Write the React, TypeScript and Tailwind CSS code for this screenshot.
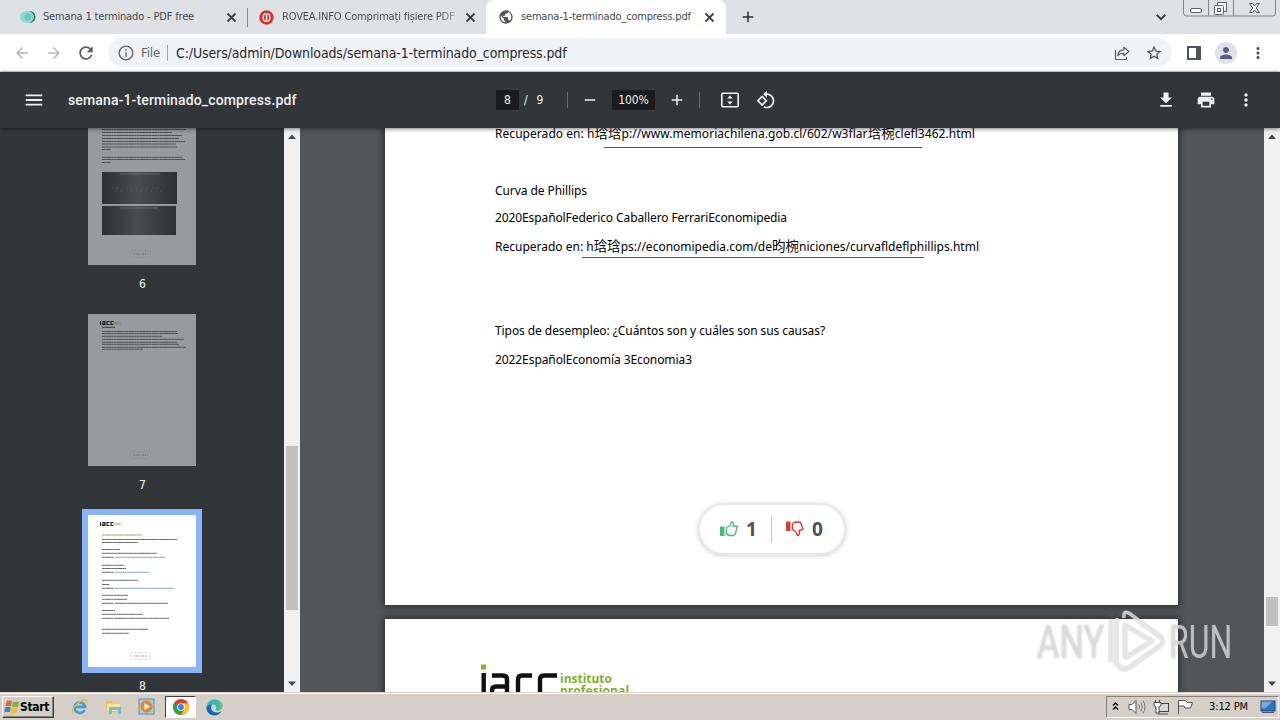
import type { ReactNode } from "react";
import {
  MdAdd, MdArrowBack, MdArrowForward, MdFileDownload, MdInfoOutline,
  MdMenu, MdMoreVert, MdPerson, MdPrint, MdPublic, MdRefresh, MdRemove, MdRotate90DegreesCcw, MdStarBorder,
} from "react-icons/md";

const UI = "font-['DejaVu_Sans_Condensed','DejaVu_Sans',sans-serif]";

function Close({ className }: { className: string }) {
  return (
    <svg className={`h-[15px] w-[15px] shrink-0 ${className}`} viewBox="0 0 15 15" fill="none">
      <path d="m3.500 3.500 8 8M11.500 3.500l-8 8" stroke="#3c4043" strokeWidth="1.800" />
    </svg>
  );
}

function TabStrip() {
  return (
    <div className={`relative flex h-[34px] shrink-0 items-start bg-[#dee1e6] text-[11px] text-[#45494d] ${UI}`}>
      <div className="flex h-[34px] w-[247px] items-center pl-[20px]">
        <svg className="h-4 w-4 shrink-0" viewBox="0 0 16 16">
          <ellipse cx="10.5" cy="8" rx="5" ry="5.8" fill="#1d776f" />
          <ellipse cx="7" cy="8" rx="7" ry="6" fill="#8edbd0" />
          <circle cx="8" cy="8" r="3.500" fill="#6cc8bc" />
        </svg>
        <span className="ml-[7px] w-[176px] overflow-hidden pt-px whitespace-pre tracking-[-0.16px]">Semana 1 terminado - PDF free</span>
        <Close className="ml-[5px]" />
      </div>
      <div className="mt-[8px] h-[19px] w-px bg-[#858a92]" />
      <div className="flex h-[34px] w-[238px] items-center pl-[11px]">
        <svg className="h-[15px] w-[15px] shrink-0" viewBox="0 0 15 15">
          <circle cx="7.5" cy="7.5" r="7.2" fill="#d5312f" />
          <rect x="4.3" y="3.8" width="6.4" height="7.4" rx="2.4" fill="none" stroke="#fff" strokeWidth="1.3" />
          <path d="M7.5 5v5.2" stroke="#fff" strokeWidth="1.5" />
        </svg>
        <span className="ml-[8px] w-[174px] overflow-hidden bg-linear-to-r from-[#45494d] from-90% to-[#a9adb3] bg-clip-text pt-px whitespace-pre tracking-[-0.16px] text-transparent">ROVEA.INFO Comprimați fișiere PDF</span>
        <Close className="ml-[7px]" />
      </div>
      <div className="flex h-[34px] w-[240px] items-center rounded-t-[8px] bg-white pl-[12px]">
        <MdPublic className="h-4 w-4 shrink-0 text-[#54585c]" />
        <span className="ml-[7px] w-[171px] pt-px whitespace-pre tracking-[-0.18px]">semana-1-terminado_compress.pdf</span>
        <Close className="ml-[10px]" />
      </div>
      <MdAdd className="mt-[8px] ml-[13px] h-[18px] w-[18px] text-[#2b2e31]" />
      <svg className="mt-[8px] ml-[395px] h-[18px] w-[18px]" viewBox="0 0 18 18" fill="none">
        <path d="m4.700 6.800 4.300 4.300 4.300-4.300" stroke="#3c4043" strokeWidth="2" />
      </svg>
      <svg className="ml-[13px] h-[18px] w-[94px]" viewBox="0 0 94 18" fill="none">
        <path d="M.5 0v13a3 3 0 0 0 3 3h86a3 3 0 0 0 3-3V0M25.500 0v16M50.500 0v16" stroke="#80858d" />
        <rect x="7.500" y="8.500" width="11" height="4" rx="1.500" fill="#fff" stroke="#5a5f66" />
        <path d="M34.500 5.500v-3h9v9h-3" fill="#fff" stroke="#5a5f66" />
        <rect x="31.500" y="5.500" width="9" height="9" rx="1" fill="#fff" stroke="#5a5f66" />
        <rect x="34.500" y="8.500" width="3" height="3" stroke="#5a5f66" />
        <path d="M66.500 3.500h3l2 2.500 2-2.500h3l-3.300 4.500 3.300 4.500h-3l-2-2.500-2 2.500h-3l3.300-4.500z" fill="#fff" stroke="#5a5f66" />
      </svg>
    </div>
  );
}

function AddressBar() {
  return (
    <div className={`flex h-[38px] shrink-0 items-center border-b border-[#d5d7da] bg-white ${UI}`}>
      <MdArrowBack className="ml-[13px] h-[18px] w-[18px] text-[#b4b7ba]" />
      <MdArrowForward className="ml-[14px] h-[18px] w-[18px] text-[#b4b7ba]" />
      <MdRefresh className="ml-[13px] h-[20px] w-[20px] text-[#55595d]" />
      <div className="ml-[12px] flex h-[29px] w-[1064px] items-center rounded-full bg-[#f0f3f6]">
        <MdInfoOutline className="ml-[9px] h-[18px] w-[18px] text-[#6a6e72]" />
        <span className="ml-[6px] w-[26px] text-[13px] tracking-[-0.1px] text-[#5f6368]">File</span>
        <span className="h-4 w-px bg-[#a4a8ac]" />
        <span className="ml-[8px] grow pt-px text-[14px] whitespace-pre tracking-[-0.12px] text-[#26292c]">C:/Users/admin/Downloads/semana-1-terminado_compress.pdf</span>
        <svg className="mr-[15px] h-4 w-4" viewBox="0 0 16 16" fill="none" stroke="#5b5f63" strokeWidth="1.200">
          <path d="M1.500 5v9.500h11V12" />
          <path d="M3.800 10.500c.3-3.800 2.300-5.500 6-5.700V2.300L15 6.500l-5.200 4.200V8.200c-2.800 0-4.600.6-6 2.300z" strokeLinejoin="round" />
        </svg>
        <MdStarBorder className="mr-[9px] h-[18px] w-[18px] text-[#4c5054]" />
      </div>
      <svg className="ml-[15px] h-[14px] w-[14px]" viewBox="0 0 14 14">
        <path d="M0 0h14v14H0zM2 2v10h7V2z" fill="#505458" fillRule="evenodd" />
      </svg>
      <div className="ml-[14px] flex h-[22px] w-[22px] items-center justify-center rounded-full bg-[#dfe2e8]">
        <MdPerson className="h-[18px] w-[18px] text-[#505e80]" />
      </div>
      <MdMoreVert className="ml-[12px] h-[18px] w-[18px] text-[#4c5054]" />
    </div>
  );
}

function PdfToolbar() {
  return (
    <div className="relative z-10 flex h-[56px] shrink-0 items-center bg-[#323639] font-['Roboto',sans-serif] text-[#f1f1f1] shadow-[0_1px_4px_rgba(0,0,0,0.5)]">
      <MdMenu className="ml-[23px] h-[22px] w-[22px]" />
      <span className="ml-[23px] w-[428px] text-[14px] font-medium whitespace-pre tracking-[0.14px]">semana-1-terminado_compress.pdf</span>
      <span className={`flex h-5 w-[23px] items-center justify-center bg-[#191b1c] text-[12px] ${UI}`}>8</span>
      <span className={`w-[48px] pl-[5px] text-[12px] whitespace-pre [word-spacing:1px] ${UI}`}>{"/  9"}</span>
      <span className="h-4 w-px bg-[#65686b]" />
      <MdRemove className="ml-[13px] h-[18px] w-[18px]" />
      <span className={`ml-[13px] flex h-5 w-[43px] items-center justify-center bg-[#191b1c] text-[12px] tracking-[-0.1px] ${UI}`}>100%</span>
      <MdAdd className="ml-[13px] h-[18px] w-[18px]" />
      <span className="ml-[13px] h-4 w-px bg-[#65686b]" />
      <svg className="ml-[21px] h-4 w-[18px]" viewBox="0 0 18 16" fill="none" stroke="#f1f1f1">
        <rect x="0.800" y="1.200" width="16.400" height="13.600" rx="1" strokeWidth="1.600" />
        <path d="M6.300 6.500 9 3.500 11.700 6.500zM6.300 9.500 9 12.500 11.700 9.500z" fill="#f1f1f1" stroke="none" />
      </svg>
      <MdRotate90DegreesCcw className="ml-[17px] h-[20px] w-[20px]" />
      <span className="grow" />
      <MdFileDownload className="mr-[20px] h-[20px] w-[20px]" />
      <MdPrint className="mr-[20px] h-[20px] w-[20px]" />
      <MdMoreVert className="mr-[24px] h-[20px] w-[20px]" />
    </div>
  );
}

type Line = [x: number, y: number, w: number, color?: string];

function TextLines({ lines }: { lines: Line[] }) {
  return (
    <g strokeOpacity=".75">
      {lines.map(([x, y, w, color], i) => (
        <path key={i} d={`M${x} ${y}h${w}`} stroke={color ?? "#35383a"} strokeWidth="1" strokeDasharray="3 .2 6 .15 2 .2" />
      ))}
    </g>
  );
}

function ThumbLogo({ muted }: { muted?: boolean }) {
  return (
    <g fill="none">
      <path d="M12.500 7v4M14.500 7.500h2.500v3h-2.500v-1.500h2.500M21.500 7.500h-2.500v3h2.500M25.500 7.500h-2.500v3h2.500" stroke="#1b1d1e" strokeWidth="1.100" />
      <path d="M25.500 8.200h7M25.500 9.800h8" stroke={muted ? "#7c8855" : "#a5c55a"} strokeWidth=".9" />
    </g>
  );
}

function ThumbFooter({ y }: { y: number }) {
  return (
    <g fill="none">
      <rect x="42" y={y - 3.500} width="21" height="7" rx="3.500" stroke="#777" strokeOpacity=".28" strokeWidth=".7" />
      <path d={`M46 ${y}h14`} stroke="#555" strokeOpacity=".7" strokeDasharray="1 1.500 2 1" />
    </g>
  );
}

const page6: Line[] = [
  [14, 1.5, 84], [14, 4.500, 70], [14, 7.500, 80], [14, 10.500, 77], [14, 13.500, 83], [14, 16, 74], [14, 19, 75], [14, 21.500, 9],
  [14, 29.300, 81], [14, 31.500, 83], [14, 34.500, 9],
];
const page7: Line[] = [
  [14, 13.300, 13, "#17191a"], [14, 17.500, 75], [14, 19.500, 76], [14, 22.300, 60], [14, 25.300, 82], [14, 28.300, 75], [14, 30.300, 77],
  [14, 33.300, 84], [14, 35.300, 41],
];
const page8: Line[] = [
  [14, 20, 40, "#7c7b4f"], [14, 24.500, 75], [14, 27.500, 36], [14, 34.500, 18], [14, 38.300, 55], [14, 42.300, 12], [27, 42.300, 50, "#5285a8"],
  [14, 50.300, 22], [14, 53.500, 24], [14, 57.300, 12], [27, 57.300, 34, "#5285a8"], [14, 65.300, 36], [14, 69.500, 7], [14, 73.300, 12],
  [27, 73.300, 59, "#5285a8"], [14, 80.300, 26], [14, 84.300, 25], [14, 88.300, 12], [27, 88.300, 53], [14, 95.500, 13], [14, 99.300, 41],
  [14, 103.300, 12], [27, 103.300, 54], [14, 114.300, 46], [14, 118.300, 27],
];

function ThumbLabel({ children }: { children: ReactNode }) {
  return <div className={`pl-px text-center text-[12px] leading-[16px] text-[#f5f5f5] ${UI}`}>{children}</div>;
}

function Thumbnails() {
  return (
    <div className="flex w-[284px] shrink-0 flex-col items-center overflow-hidden bg-[#323639]">
      <svg className="h-[137px] w-[108px] shrink-0 bg-[#979b9e]" viewBox="0 0 108 137">
        <defs>
          <linearGradient id="chart">
            <stop offset="0" stopColor="#2d3134" />
            <stop offset=".48" stopColor="#4a4c4d" />
            <stop offset="1" stopColor="#2d3134" />
          </linearGradient>
        </defs>
        <TextLines lines={page6} />
        <rect x="14" y="44" width="75" height="32" fill="url(#chart)" />
        <rect x="14" y="78" width="74" height="29" fill="url(#chart)" />
        <path d="M32 46h40M32 80h38" stroke="#777b7e" strokeOpacity=".7" />
        <path d="M24 60h50M28 63h46" stroke="#7a6253" strokeOpacity=".5" strokeDasharray="1 3 2 4" />
        <ThumbFooter y={126} />
      </svg>
      <div className="h-[11px] shrink-0" />
      <ThumbLabel>6</ThumbLabel>
      <div className="h-[22px] shrink-0" />
      <svg className="h-[152px] w-[108px] shrink-0 bg-[#979b9e]" viewBox="0 0 108 152">
        <ThumbLogo muted />
        <TextLines lines={page7} />
        <ThumbFooter y={141} />
      </svg>
      <div className="h-[11px] shrink-0" />
      <ThumbLabel>7</ThumbLabel>
      <div className="h-[16px] shrink-0" />
      <div className="shrink-0 border-[6px] border-[#8ab4f8]">
        <svg className="h-[152px] w-[108px] bg-white" viewBox="0 0 108 152">
          <ThumbLogo />
          <TextLines lines={page8} />
          <ThumbFooter y={141} />
        </svg>
      </div>
      <div className="h-[5px] shrink-0" />
      <ThumbLabel>8</ThumbLabel>
    </div>
  );
}

function Arrow({ up }: { up?: boolean }) {
  return (
    <svg className="mx-auto h-[17px] w-[16px] shrink-0" viewBox="0 0 16 17">
      <path d={up ? "M4 11h8L8 6.500z" : "M4 6.500h8L8 11z"} fill="#45494c" />
    </svg>
  );
}

function Cjk({ children }: { children: ReactNode }) {
  return <span className="font-['Noto_Sans_CJK_SC',sans-serif] text-[13.5px] leading-[1px]">{children}</span>;
}

function Rating() {
  return (
    <div className="mt-[133px] ml-[203px] flex h-[52px] w-[148px] items-center rounded-full border-2 border-[#e8e8e8] bg-white font-['Open_Sans',sans-serif] text-[19px] font-bold text-[#46535e] shadow-[0_1px_5px_rgba(0,0,0,0.18)]">
      <svg className="ml-[20px] h-[18px] w-[19px]" viewBox="0 0 19 18">
        <path d="M0 6.500h4.500V16H0z" fill="#4dbb7b" />
        <path d="M6.500 7.500 10 5.500l1.500-3.800c2.300.3 2.400 2 1.400 4.500h4.400l-1.800 7.500-1.800 1.800H9.500L6.500 14z" fill="none" stroke="#4dbb7b" strokeWidth="1.400" strokeLinejoin="round" />
      </svg>
      <span className="ml-[7px] w-[25px]">1</span>
      <span className="h-[26px] w-px bg-[#c3c7ca]" />
      <svg className="ml-[14px] h-[18px] w-[19px]" viewBox="0 0 19 18">
        <path d="M0 1.500h4.500V11H0z" fill="#cf4034" />
        <path d="M6.500 4 9 2l5.500.3 2.500 7-4 1.200c.9 2.500.6 4.500-1.600 5.200L10 12l-3.500-2.500z" fill="none" stroke="#cf4034" strokeWidth="1.400" strokeLinejoin="round" />
      </svg>
      <span className="ml-[7px]">0</span>
    </div>
  );
}

function Viewer() {
  return (
    <div className="flex min-w-0 grow flex-col overflow-hidden bg-[#525659] pl-[85px]">
      <div className="flex h-[477px] w-[793px] shrink-0 flex-col items-start bg-white pl-[110px] font-['Noto_Sans','Noto_Sans_CJK_SC',sans-serif] text-[12px] leading-[20px] whitespace-pre text-black shadow-[0_0_6px_2px_rgba(0,0,0,0.45)]">
        <div className="mt-[-4px] h-5 shrink-0 tracking-[0.048px]">Recuperado en: h<Cjk>琀琀</Cjk>p://www.memoriachilena.gob.cl/602/w3flar<Cjk>琀椀</Cjk>clefl3462.html</div>
        <div className="mt-[3px] ml-[109px] h-px w-[318px] bg-[#555]" />
        <div className="mt-[33px] h-5 tracking-[-0.08px]">Curva de Phillips</div>
        <div className="mt-[7px] h-5 tracking-[-0.104px]">2020EspañolFederico Caballero FerrariEconomipedia</div>
        <div className="mt-[9px] h-5 tracking-[-0.005px]">Recuperado en: h<Cjk>琀琀</Cjk>ps://economipedia.com/de<Cjk>昀椀</Cjk>niciones/curvafldeflphillips.html</div>
        <div className="ml-[87px] h-px w-[342px] bg-[#555]" />
        <div className="mt-[63px] h-5 tracking-[-0.077px]">Tipos de desempleo: ¿Cuántos son y cuáles son sus causas?</div>
        <div className="mt-[9px] h-5 tracking-[-0.083px]">2022EspañolEconomía 3Economia3</div>
        <Rating />
      </div>
      <div className="mt-[14px] h-[200px] w-[793px] shrink-0 bg-white pt-[44px] pl-[95px] shadow-[0_0_6px_2px_rgba(0,0,0,0.45)]">
        <div className="flex">
          <svg className="h-[40px] w-[78px]" viewBox="0 0 78 40" fill="none">
            <rect x="1" y="1.500" width="5" height="5" fill="#82b536" />
            <path d="M3.700 10v30M12 12.500h11q4 0 4 4V40M28 23.500H16q-4 0-4 4V36M52 12.500H42q-4 0-4 4V40M77 12.500H64q-4 0-4 4V40" stroke="#111" strokeWidth="4.400" />
          </svg>
          <div className="ml-[2px] pt-[10px] font-['Open_Sans',sans-serif] text-[12px] leading-[12px] font-bold text-[#80b02b]">
            <div className="tracking-[-0.02px]">instituto</div>
            <div className="tracking-[0.1px]">profesional</div>
          </div>
        </div>
      </div>
    </div>
  );
}

function Watermark() {
  return (
    <div className="absolute top-[608px] left-[1037px] flex h-[66px] items-center font-['Roboto',sans-serif] text-[47px] leading-none text-[#e0e0e0]/75 [text-shadow:0_0_3px_rgba(110,110,110,0.4)]">
      <span className="w-[71px] origin-left scale-x-[0.73]">ANY</span>
      <svg className="h-[66px] w-[60px]" viewBox="0 0 60 66" fill="none" strokeLinejoin="round">
        <path d="M2 54V12q0-3 4-3M8 58V10M17 50V17l27 16-27 17M14 9q0-7 6-4l34 25M9 56q6 8 13 3l30-21q5-4 1-8" stroke="#707070" strokeOpacity=".14" strokeWidth="6" />
        <path d="M3 54V12M9 56V10M17 50V17l27 16zM16 10q-1-8 5-5l32 24M9 56q6 8 13 3l30-22q4-4 1-8" stroke="#e4e4e4" strokeOpacity=".8" strokeWidth="3.500" />
      </svg>
      <span className="ml-[1px] w-[66px] origin-left scale-x-[0.68]">RUN</span>
    </div>
  );
}

function Taskbar() {
  return (
    <div className={`flex h-[28px] shrink-0 items-center border-t border-[#d4d0c8] bg-[#d5cfc7] pt-[1px] shadow-[inset_0_1px_0_#fff] ${UI}`}>
      <div className="ml-[2px] flex h-[22px] w-[52px] items-center border border-t-white border-r-[#404040] border-b-[#404040] border-l-white bg-[#d5cfc7] shadow-[inset_-1px_-1px_0_#858078]">
        <svg className="ml-px h-4 w-4 shrink-0" viewBox="0 0 16 16">
          <path d="M2.500 2.500Q5 .800 8 2.200L7 7.200Q4 6 1.300 7.500z" fill="#e5652e" />
          <path d="M9 2.500q3 1.200 6-.2L14 7.500Q11 9 8 7.500z" fill="#78b540" />
          <path d="M1.200 8.500Q4 7 6.800 8.300l-1 5Q3 12 .3 13.500z" fill="#3e80cb" />
          <path d="M7.800 8.600q3 1.300 6-.1l-1 5q-3 1.500-6 .2z" fill="#f4bd2e" />
        </svg>
        <span className="text-[12px] font-bold tracking-[-0.3px] text-black">Start</span>
      </div>
      <svg className="ml-[17px] h-[18px] w-[18px]" viewBox="0 0 18 18" fill="none">
        <path d="M13.500 12A5.300 5.300 0 1 1 14 8.800H5" stroke="#3d9fd8" strokeWidth="2.700" />
        <path d="M2 15.500C-1 12 9 1 15 1.800c1.700.4 1.400 2.200.8 3.200" stroke="#e1bd4b" strokeWidth="1.300" />
      </svg>
      <svg className="ml-[16px] h-[18px] w-[18px]" viewBox="0 0 18 18">
        <path d="M1 3h6l1 1.500h7V14H1z" fill="#e5c35d" />
        <path d="M2 5.500h13V13H2z" fill="#f5e39a" />
        <path d="M4 9h12v7h-3v-4H7v4H4z" fill="#79b9dc" />
      </svg>
      <svg className="ml-[15px] h-[18px] w-[18px]" viewBox="0 0 18 18">
        <rect x="1" y="1" width="15" height="15" fill="#a9cbe2" stroke="#5a8fb8" />
        <circle cx="8.500" cy="8.500" r="6" fill="#ee8420" />
        <path d="M6.500 5v7l5.500-3.500z" fill="#fff" />
      </svg>
      <div className="ml-[9px] flex h-[22px] w-[31px] items-center justify-center border border-t-[#404040] border-r-white border-b-white border-l-[#404040] bg-white">
        <svg className="h-4 w-4" viewBox="0 0 16 16">
          <circle cx="8" cy="8" r="8" fill="#e23b2e" />
          <path d="M8 8 1.070 4A8 8 0 0 0 8 16l3.500-6z" fill="#2e9e4c" />
          <path d="M8 4.300h7.100A8 8 0 0 1 8 16l3.500-6z" fill="#fbc520" />
          <circle cx="8" cy="8" r="3.800" fill="#fff" />
          <circle cx="8" cy="8" r="2.900" fill="#3f7de8" />
        </svg>
      </div>
      <svg className="ml-[10px] h-[17px] w-[17px]" viewBox="0 0 17 17">
        <path d="M.500 8C1.200 3 4.500.500 8.500.500c5 0 8 3.300 8 6.800 0 3-2.500 4.200-5 4.200-2 0-2.500-.8-1.500-2 1-2.500-1-4-3.200-4C4 5.500 1.500 6.500.500 8z" fill="#35b8b3" />
        <path d="M.500 8c1.200-1.700 3.300-2.700 5.600-2.500C3.500 9 6 13.500 10.500 13.500c2 0 3.500-.4 5-1.200C13.800 15 11.500 16.500 8.500 16.500 3.500 16.500 0 12.500.500 8z" fill="#1668b6" />
        <path d="M12 1.500c3 1 4.500 3.500 4.500 5.800 0 3-2.500 4.200-5 4.200 3-2 3.500-6.500.5-10z" fill="#64cd65" />
      </svg>
      <span className="grow" />
      <div className="mr-px flex h-[22px] w-[173px] items-center border border-t-[#858078] border-r-white border-b-white border-l-[#858078]">
        <svg className="h-[20px] w-[92px] shrink-0" viewBox="0 0 92 20" fill="none">
          <path d="m6 8.500 2.500-2.500 2.500 2.500M6 12.500l2.500-2.500 2.500 2.500" stroke="#111" strokeWidth="1.500" />
          <path d="M22 7.500h3l4-4v13l-4-4h-3z" fill="#fff" stroke="#555" />
          <path d="M31.500 7.500q2 2.500 0 5M33.800 5.500q3 4.500 0 9M36 3.500q4 6.500 0 13" stroke="#777" />
          <rect x="50.500" y="6.500" width="11" height="8" fill="#d8d8d8" stroke="#444" />
          <path d="M51 17h10" stroke="#555" />
          <path d="M48.500 3v3M52.500 3v3M47 5.500h7v3l-2 1.500v6h-3v-6l-2-1.500z" fill="#fff" stroke="#444" />
          <path d="M71.500 17V3.500h7l1.500 2h5.500l-2 5.500H78l-1-2h-5.500" fill="#fff" stroke="#555" />
        </svg>
        <span className="ml-[10px] w-[51px] pt-px text-[11px] whitespace-pre tracking-[-0.12px] text-black">3:12 PM</span>
        <svg className="h-[14px] w-4" viewBox="0 0 16 14">
          <rect x="1" y="1" width="14" height="10" fill="#2e70c4" stroke="#1d467b" />
          <path d="M1.500 1.500h11L5 8.500H1.500z" fill="#74a9e5" />
          <path d="M2 12.500h12" stroke="#495563" />
        </svg>
      </div>
    </div>
  );
}

export default function App() {
  return (
    <div className="relative flex h-[720px] w-[1280px] flex-col overflow-hidden">
      <TabStrip />
      <AddressBar />
      <PdfToolbar />
      <div className="flex h-[564px] shrink-0">
        <Thumbnails />
        <div className="flex w-[16px] shrink-0 flex-col bg-[#f1f1f1]">
          <Arrow up />
          <div className="mx-[2px] mt-[301px] h-[164px] bg-[#c1c1c1]" />
          <span className="grow" />
          <Arrow />
        </div>
        <Viewer />
        <div className="flex w-[16px] shrink-0 flex-col bg-[#f1f1f1]">
          <Arrow up />
          <div className="mx-[2px] mt-[452px] h-[29px] bg-[#c1c1c1]" />
          <span className="grow" />
          <Arrow />
        </div>
      </div>
      <Taskbar />
      <Watermark />
    </div>
  );
}
